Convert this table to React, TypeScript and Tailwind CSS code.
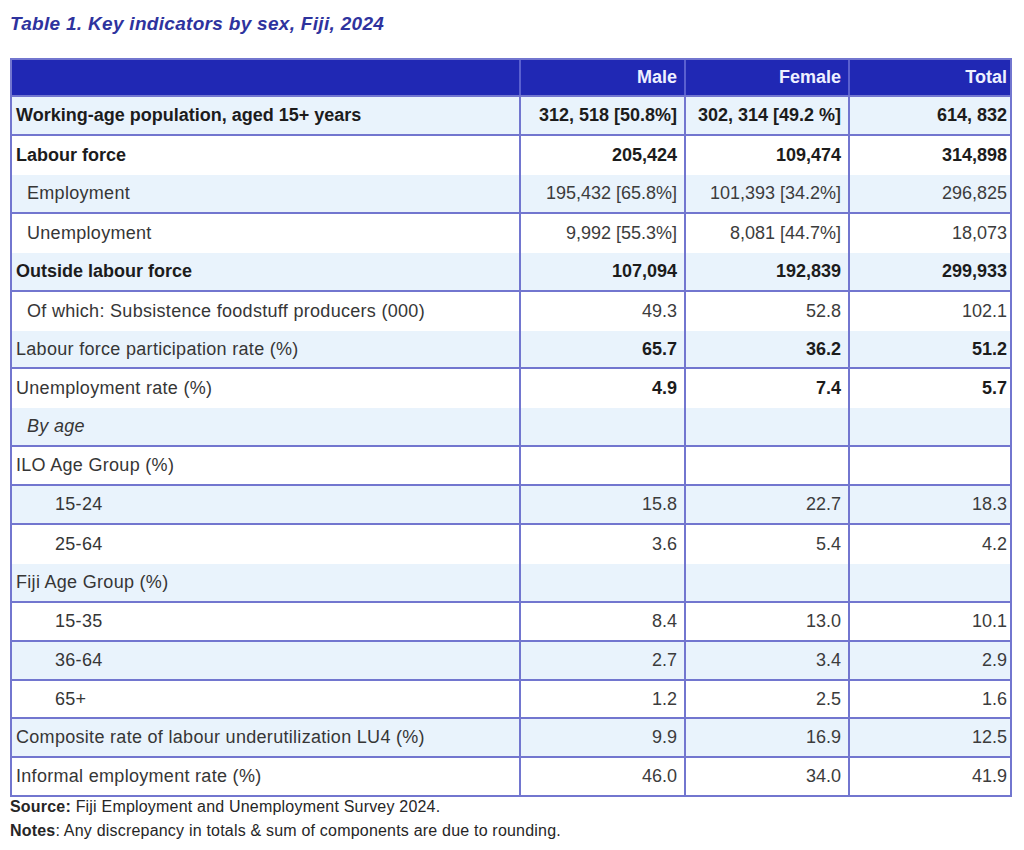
type Row = {
  label: string;
  indent: "none" | "sub" | "deep";
  bold?: boolean;
  italic?: boolean;
  values: [string, string, string];
  boldValues?: boolean;
  tinted: boolean;
  line: boolean;
  short?: boolean;
};

const rows: Row[] = [
  { label: "Working-age population, aged 15+ years", indent: "none", bold: true, values: ["312, 518 [50.8%]", "302, 314 [49.2 %]", "614, 832"], boldValues: true, tinted: true, line: true },
  { label: "Labour force", indent: "none", bold: true, values: ["205,424", "109,474", "314,898"], boldValues: true, tinted: false, line: false },
  { label: "Employment", indent: "sub", values: ["195,432 [65.8%]", "101,393 [34.2%]", "296,825"], tinted: true, line: true },
  { label: "Unemployment", indent: "sub", values: ["9,992 [55.3%]", "8,081 [44.7%]", "18,073"], tinted: false, line: false },
  { label: "Outside labour force", indent: "none", bold: true, values: ["107,094", "192,839", "299,933"], boldValues: true, tinted: true, line: true },
  { label: "Of which: Subsistence foodstuff producers (000)", indent: "sub", values: ["49.3", "52.8", "102.1"], tinted: false, line: false },
  { label: "Labour force participation rate (%)", indent: "none", values: ["65.7", "36.2", "51.2"], boldValues: true, tinted: true, line: true, short: true },
  { label: "Unemployment rate (%)", indent: "none", values: ["4.9", "7.4", "5.7"], boldValues: true, tinted: false, line: false },
  { label: "By age", indent: "sub", italic: true, values: ["", "", ""], tinted: true, line: true },
  { label: "ILO Age Group (%)", indent: "none", values: ["", "", ""], tinted: false, line: true },
  { label: "15-24", indent: "deep", values: ["15.8", "22.7", "18.3"], tinted: true, line: true },
  { label: "25-64", indent: "deep", values: ["3.6", "5.4", "4.2"], tinted: false, line: false },
  { label: "Fiji Age Group (%)", indent: "none", values: ["", "", ""], tinted: true, line: true },
  { label: "15-35", indent: "deep", values: ["8.4", "13.0", "10.1"], tinted: false, line: true },
  { label: "36-64", indent: "deep", values: ["2.7", "3.4", "2.9"], tinted: true, line: true },
  { label: "65+", indent: "deep", values: ["1.2", "2.5", "1.6"], tinted: false, line: true, short: true },
  { label: "Composite rate of labour underutilization LU4 (%)", indent: "none", values: ["9.9", "16.9", "12.5"], tinted: true, line: true },
  { label: "Informal employment rate (%)", indent: "none", values: ["46.0", "34.0", "41.9"], tinted: false, line: true },
];

const indentClass = {
  none: "pl-[4px]",
  sub: "pl-[15px]",
  deep: "pl-[43px]",
};

export default function App() {
  return (
    <div className="min-h-[850px] bg-white pl-[10px] pt-[12px] font-['Liberation_Sans',Arial,sans-serif]">
      {/* Title */}
      <h1 className="mb-[22px] text-[19px] leading-[24px] font-bold italic tracking-[0.3px] text-[#2e339e]">
        Table 1. Key indicators by sex, Fiji, 2024
      </h1>

      <div className="w-[1002px] border-x-2 border-[#7276cf]">
        {/* Header */}
        <div className="grid h-[39px] grid-cols-[509px_165px_164px_164px] border-y-2 border-[#7276cf] bg-[#2028b4] text-[18px] font-bold text-[#eef0ff]">
          <div className="border-r-2 border-[#5a60d0]" />
          <div className="flex items-center justify-end border-r-2 border-[#5a60d0] pr-[7px]">Male</div>
          <div className="flex items-center justify-end border-r-2 border-[#5a60d0] pr-[7px]">Female</div>
          <div className="flex items-center justify-end pr-[7px]">Total</div>
        </div>

        {/* Body */}
        {rows.map((row, i) => (
          <div
            key={i}
            className={`grid grid-cols-[509px_165px_164px_164px] text-[18px] ${row.short ? "h-[38px]" : "h-[39px]"} ${
              row.tinted ? "bg-[#e9f3fc]" : "bg-white"
            } ${row.line ? "border-b-2 border-[#7276cf]" : ""}`}
          >
            <div
              className={`flex items-center border-r-2 border-[#7276cf] ${indentClass[row.indent]} ${
                row.bold ? "font-bold text-[#1c1c1c]" : "tracking-[0.3px] text-[#363636]"
              } ${row.italic ? "italic" : ""}`}
            >
              {row.label}
            </div>
            {row.values.map((v, j) => (
              <div
                key={j}
                className={`flex items-center justify-end pr-[7px] ${j < 2 ? "border-r-2 border-[#7276cf]" : ""} ${
                  row.boldValues ? "font-bold text-[#1c1c1c]" : "text-[#3c3c3c]"
                }`}
              >
                {v}
              </div>
            ))}
          </div>
        ))}
      </div>

      {/* Footnotes */}
      <div className="text-[16px] tracking-[0.2px] text-[#262626]">
        <p className="leading-[20px]">
          <span className="font-bold">Source:</span> Fiji Employment and Unemployment Survey 2024.
        </p>
        <p className="mt-[4px] leading-[20px]">
          <span className="font-bold">Notes</span>: Any discrepancy in totals &amp; sum of components are due to rounding.
        </p>
      </div>
    </div>
  );
}
